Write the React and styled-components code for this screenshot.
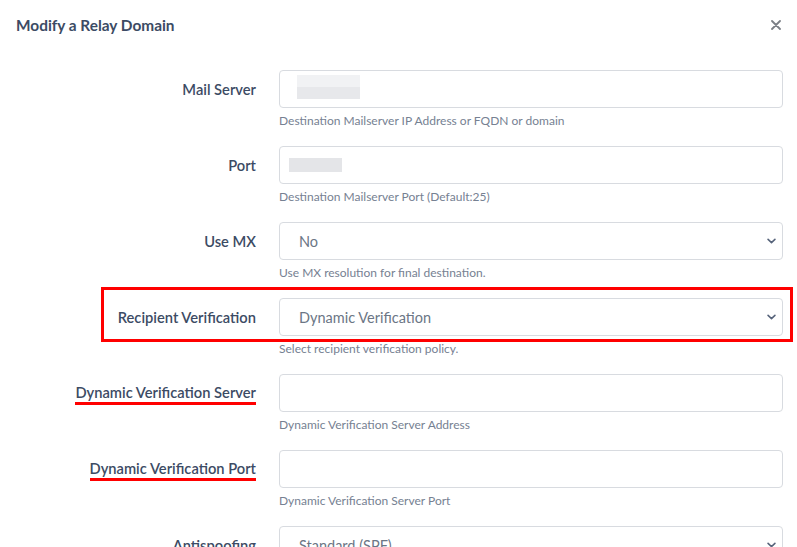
import React from 'react';
import styled, { createGlobalStyle } from 'styled-components';

const GlobalStyle = createGlobalStyle`
  html, body {
    margin: 0;
    padding: 0;
    background: #fff;
  }
  body {
    font-family: Lato, "Open Sans", sans-serif;
    color: #3c4b64;
    overflow: hidden;
  }
`;

const fields = [
  { label: 'Mail Server', type: 'input', blur: 'server', help: 'Destination Mailserver IP Address or FQDN or domain' },
  { label: 'Port', type: 'input', blur: 'port', help: 'Destination Mailserver Port (Default:25)' },
  { label: 'Use MX', type: 'select', value: 'No', help: 'Use MX resolution for final destination.' },
  { label: 'Recipient Verification', type: 'select', value: 'Dynamic Verification', help: 'Select recipient verification policy.', boxed: true },
  { label: 'Dynamic Verification Server', type: 'input', help: 'Dynamic Verification Server Address', marked: true },
  { label: 'Dynamic Verification Port', type: 'input', help: 'Dynamic Verification Server Port', marked: true },
  { label: 'Antispoofing', type: 'select', value: 'Standard (SPF)', help: '' },
];

const Chevron = () => (
  <ChevronIcon viewBox="0 0 10 6" width="9" height="6">
    <path d="M1.2 1.2l3.8 3.6 3.8-3.6" fill="none" stroke="#56637a" strokeWidth="1.7" strokeLinecap="round" strokeLinejoin="round" />
  </ChevronIcon>
);

const Blurred = ({ kind }) =>
  kind === 'server' ? (
    <BlurBox $left={17} $width={63}>
      <BlurRow $shade="#f1f2f4" />
      <BlurRow $shade="#e7e8eb" />
    </BlurBox>
  ) : (
    <BlurBox $left={9} $width={53}>
      <BlurRow $shade="#e4e5e8" $tall />
    </BlurBox>
  );

const App = () => {
  return (
    <Modal>
      <GlobalStyle />
      <Header>
        <Title>Modify a Relay Domain</Title>
        <Close aria-label="close">
          <svg viewBox="0 0 10 10" width="10" height="10">
            <path d="M1 1l8 8M9 1l-8 8" stroke="#7b7f86" strokeWidth="1.8" strokeLinecap="round" />
          </svg>
        </Close>
      </Header>
      <Body>
        {fields.map(field => (
          <Row key={field.label}>
            {field.boxed && <Highlight />}
            <LabelCell>
              <Label $marked={field.marked}>{field.label}</Label>
            </LabelCell>
            <Control>
              {field.type === 'input' ? (
                <InputBox>{field.blur && <Blurred kind={field.blur} />}</InputBox>
              ) : (
                <SelectBox>
                  <SelectValue>{field.value}</SelectValue>
                  <Chevron />
                </SelectBox>
              )}
              {field.help && <Help>{field.help}</Help>}
            </Control>
          </Row>
        ))}
      </Body>
    </Modal>
  );
};

export default App;

const Modal = styled.div`
  width: 797px;
  height: 547px;
  overflow: hidden;
  background: #fff;
`;

const Header = styled.div`
  display: flex;
  align-items: center;
  justify-content: space-between;
  height: 50px;
  padding: 0 16px;
`;

const Title = styled.h5`
  margin: 0;
  font-size: 15.4px;
  font-weight: 700;
  color: #3c4b64;
`;

const Close = styled.button`
  display: flex;
  align-items: center;
  justify-content: center;
  width: 20px;
  height: 20px;
  margin-right: -5px;
  padding: 0;
  border: 0;
  background: none;
`;

const Body = styled.div`
  padding: 20px 14px 0 16px;
`;

const Row = styled.div`
  position: relative;
  display: flex;
  gap: 23px;
  margin-bottom: 17px;
`;

const Highlight = styled.div`
  position: absolute;
  left: 85px;
  right: -10px;
  top: -11px;
  height: 55px;
  border: 3px solid #ff0000;
  box-sizing: border-box;
  pointer-events: none;
`;

const LabelCell = styled.div`
  width: 240px;
  height: 38px;
  display: flex;
  align-items: center;
  justify-content: flex-end;
`;

const Label = styled.label`
  font-size: 14.7px;
  font-weight: 600;
  color: #3c4b64;
  line-height: 20px;
  white-space: nowrap;
  margin-top: ${({ $marked }) => ($marked ? '1px' : '-1px')};
  border-bottom: ${({ $marked }) => ($marked ? '3px solid #ff0000' : '0')};
`;

const Control = styled.div`
  flex: 1;
  display: flex;
  flex-direction: column;
`;

const InputBox = styled.div`
  position: relative;
  height: 38px;
  box-sizing: border-box;
  border: 1px solid #d8dbe0;
  border-radius: 4px;
  background: #fff;
`;

const BlurBox = styled.div`
  position: absolute;
  left: ${({ $left }) => $left}px;
  top: 4px;
  width: ${({ $width }) => $width}px;
  display: flex;
  flex-direction: column;
`;

const BlurRow = styled.div`
  height: ${({ $tall }) => ($tall ? '14px' : '12px')};
  margin-top: ${({ $tall }) => ($tall ? '7px' : '0')};
  background: ${({ $shade }) => $shade};
`;

const SelectBox = styled.div`
  height: 38px;
  box-sizing: border-box;
  border: 1px solid #d8dbe0;
  border-radius: 4px;
  background: #fff;
  display: flex;
  align-items: center;
  justify-content: space-between;
  padding: 0 6px 0 19px;
`;

const SelectValue = styled.span`
  font-size: 14.5px;
  color: #6b7685;
`;

const ChevronIcon = styled.svg`
  display: block;
`;

const Help = styled.small`
  margin-top: 5px;
  font-size: 12px;
  line-height: 16px;
  color: #768192;
  white-space: nowrap;
`;
